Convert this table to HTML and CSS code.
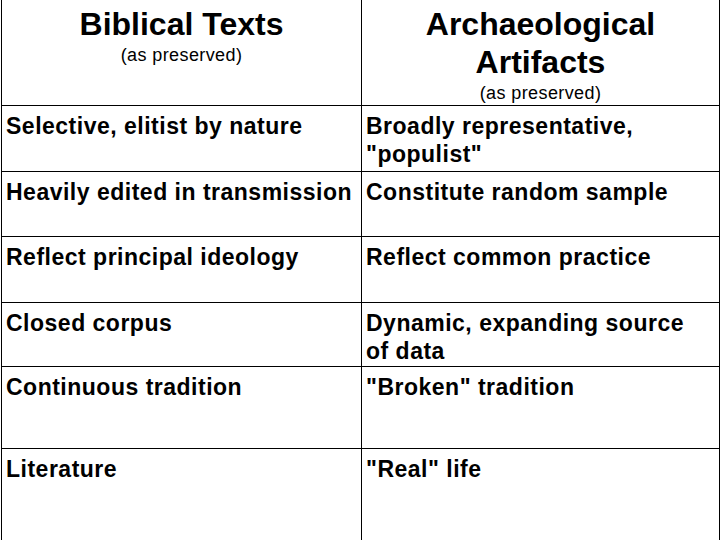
FILE: index.html
```html
<!DOCTYPE html>
<html lang="en">
<head>
<meta charset="utf-8">
<title>Biblical Texts vs Archaeological Artifacts</title>
<link rel="stylesheet" href="styles.css">
</head>
<body>
<main class="page">
  <table class="compare">
    <colgroup>
      <col class="col-left">
      <col class="col-right">
    </colgroup>
    <thead>
      <tr class="row-head">
        <th class="head">
          <span class="head-title">Biblical Texts</span>
          <span class="head-sub">(as preserved)</span>
        </th>
        <th class="head">
          <span class="head-title">Archaeological<br>Artifacts</span>
          <span class="head-sub">(as preserved)</span>
        </th>
      </tr>
    </thead>
    <tbody>
      <tr class="row-1">
        <td>Selective, elitist by nature</td>
        <td>Broadly representative,<br>"populist"</td>
      </tr>
      <tr class="row-2">
        <td>Heavily edited in transmission</td>
        <td>Constitute random sample</td>
      </tr>
      <tr class="row-3">
        <td>Reflect principal ideology</td>
        <td>Reflect common practice</td>
      </tr>
      <tr class="row-4">
        <td>Closed corpus</td>
        <td>Dynamic, expanding source<br>of data</td>
      </tr>
      <tr class="row-5">
        <td>Continuous tradition</td>
        <td>"Broken" tradition</td>
      </tr>
      <tr class="row-6">
        <td>Literature</td>
        <td>"Real" life</td>
      </tr>
    </tbody>
  </table>
</main>
</body>
</html>
```

FILE: styles.css
```css
html, body {
  margin: 0;
  padding: 0;
  background: #ffffff;
}

body {
  width: 720px;
  height: 540px;
  overflow: hidden;
  font-family: "Liberation Sans", Arial, Helvetica, sans-serif;
  color: #000000;
}

.page {
  padding-left: 1px;
}

.compare {
  width: 718px;
  border-collapse: collapse;
  table-layout: fixed;
}

.col-left {
  width: 360px;
}

.col-right {
  width: 358px;
}

.compare th,
.compare td {
  border: 1px solid #000000;
  vertical-align: top;
  text-align: left;
  padding: 6px 4px 0 4px;
  font-size: 23px;
  font-weight: bold;
  line-height: 28px;
  letter-spacing: 0.5px;
  white-space: nowrap;
}

.compare th.head {
  border-top: none;
  text-align: center;
  padding-top: 5px;
}

.head-title {
  display: block;
  font-size: 32px;
  line-height: 38px;
  letter-spacing: 0;
}

.head-sub {
  display: block;
  font-size: 18px;
  font-weight: normal;
  line-height: 24px;
  letter-spacing: 0.4px;
}

.row-head { height: 105px; }
.row-1 { height: 66px; }
.row-2 { height: 65px; }
.row-3 { height: 66px; }
.row-4 { height: 64px; }
.row-5 { height: 82px; }
.row-6 { height: 110px; }

.row-6 td {
  border-bottom: none;
}
```
